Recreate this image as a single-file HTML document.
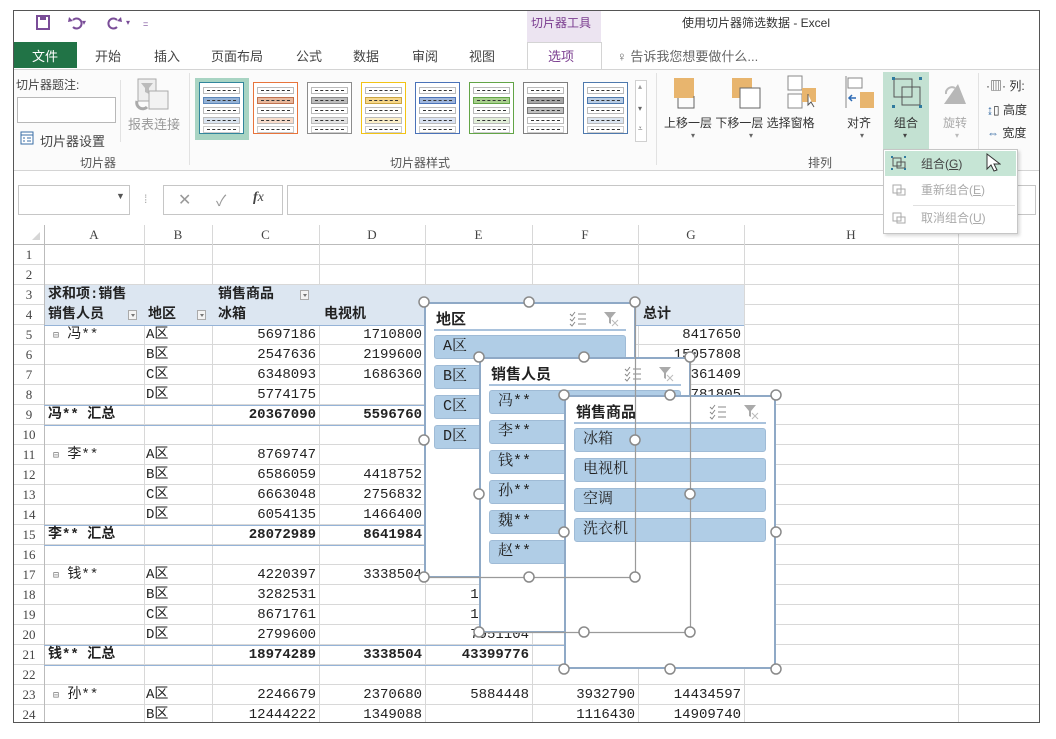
<!DOCTYPE html>
<html><head><meta charset="utf-8"><style>
*{margin:0;padding:0;box-sizing:border-box}
body{width:1056px;height:739px;background:#fff;position:relative;overflow:hidden;font-family:"Liberation Sans","Noto Sans CJK SC",sans-serif;font-size:12px;color:#444}
.a{position:absolute}
.frame{position:absolute;left:13px;top:10px;width:1027px;height:713px;border:1.5px solid #555}
.ui{position:absolute;font-family:"Liberation Sans","Noto Sans CJK SC",sans-serif;font-size:12px;color:#444;white-space:nowrap}
.tile{position:absolute;top:82px;width:45px;height:52px;border:1px solid;background:#fff}
.tile i{position:absolute;left:3px;width:37px;height:7px;border:1px solid;background:#fff}
.tile i:after{content:"";position:absolute;left:3px;right:3px;top:2px;border-top:1.5px dashed #333}
.c{position:absolute;height:20px;line-height:20px;font-family:"Liberation Mono","Noto Sans CJK SC",monospace;font-size:14px;color:#222;white-space:nowrap}
.r{text-align:right}
.b{font-weight:bold}
.hl{position:absolute;left:44px;width:700px;border-top:1px solid #95b3d7}
.vl{position:absolute;top:225px;height:497px;border-left:1px solid #d8d8d8}
.ch{position:absolute;top:225px;height:20px;line-height:20px;text-align:center;font-family:"Liberation Serif",serif;font-size:13px;color:#444}
.rh{position:absolute;left:14px;width:30px;height:20px;line-height:20px;text-align:center;font-family:"Liberation Serif",serif;font-size:13px;color:#444}
.sl{position:absolute;background:#fff;border:2px solid #8fa9c6}
.st{position:absolute;left:10px;top:4px;font-family:"Liberation Sans","Noto Sans CJK SC",sans-serif;font-weight:bold;font-size:15px;color:#222}
.sln{position:absolute;left:8px;right:8px;top:25px;border-top:2px solid #a9c2dc}
.it{position:absolute;left:8px;right:8px;height:24px;background:#b0cde6;border:1px solid #9fbbd6;border-radius:3px;line-height:22px;padding-left:8px;font-family:"Liberation Mono","Noto Serif CJK SC",serif;font-size:15px;color:#222}
.dd{position:absolute;width:9px;height:10px;border:1px solid #aaa;background:#f4f4f4}
.dd:after{content:"";position:absolute;left:2px;top:3px;border:2.5px solid transparent;border-top:3px solid #777}
</style></head><body>
<div class="frame"></div>

<!-- title bar -->
<svg class="a" style="left:35px;top:15px" width="120" height="16">
<rect x="2" y="1" width="12" height="13" fill="none" stroke="#7a4d98" stroke-width="2"/><rect x="5" y="1" width="6" height="4" fill="#7a4d98"/>
<path d="M38 5 a5 5 0 1 1 0 7" fill="none" stroke="#7a4d98" stroke-width="2"/><path d="M34 2 l4 4 -5 1z" fill="#7a4d98"/>
<text x="47" y="10" font-size="8" fill="#7a4d98">▾</text>
<path d="M82 5 a5 5 0 1 0 0 7" fill="none" stroke="#7a4d98" stroke-width="2"/><path d="M86 2 l-4 4 5 1z" fill="#7a4d98"/>
<text x="91" y="10" font-size="8" fill="#7a4d98">▾</text>
<text x="108" y="12" font-size="9" fill="#7a4d98">=</text>
</svg>
<div class="a" style="left:527px;top:11px;width:74px;height:31px;background:#ece4f1"></div>
<div class="ui" style="left:531px;top:14px;color:#7a3c8f">切片器工具</div>
<div class="ui" style="left:682px;top:14px;color:#333">使用切片器筛选数据 - Excel</div>

<!-- tabs -->
<div class="a" style="left:14px;top:42px;width:63px;height:26px;background:#217346"></div>
<div class="ui" style="left:32px;top:46px;color:#fff;font-size:13px">文件</div>
<div class="ui" style="left:95px;top:46px;font-size:13px">开始</div>
<div class="ui" style="left:154px;top:46px;font-size:13px">插入</div>
<div class="ui" style="left:211px;top:46px;font-size:13px">页面布局</div>
<div class="ui" style="left:296px;top:46px;font-size:13px">公式</div>
<div class="ui" style="left:353px;top:46px;font-size:13px">数据</div>
<div class="ui" style="left:412px;top:46px;font-size:13px">审阅</div>
<div class="ui" style="left:469px;top:46px;font-size:13px">视图</div>
<div class="a" style="left:527px;top:42px;width:75px;height:28px;background:#fff;border:1px solid #d4d4d4;border-bottom:none"></div>
<div class="ui" style="left:548px;top:46px;font-size:13px;color:#7a3c8f">选项</div>
<div class="ui" style="left:617px;top:46px;font-size:13px;color:#666">♀ 告诉我您想要做什么...</div>

<!-- ribbon -->
<div class="a" style="left:14px;top:69px;width:1025px;height:102px;background:#fbfbfb;border-top:1px solid #d4d4d4;border-bottom:1px solid #d4d4d4"></div>
<div class="ui" style="left:16px;top:76px">切片器题注:</div>
<div class="a" style="left:17px;top:97px;width:99px;height:26px;border:1px solid #b8b8b8;background:#fff"></div>
<svg class="a" style="left:20px;top:131px" width="14" height="14"><rect x="1" y="1" width="12" height="12" fill="#fff" stroke="#3a6ea5"/><path d="M1 4h12M3 7h2M3 10h2M7 7h4M7 10h4" stroke="#3a6ea5"/></svg>
<div class="ui" style="left:40px;top:131px;font-size:13px">切片器设置</div>
<svg class="a" style="left:135px;top:77px" width="36" height="36"><rect x="3" y="2" width="18" height="22" fill="#eee" stroke="#aaa"/><path d="M6 6h12l-4 5v6l-4-2v-4z" fill="#bbb"/><rect x="14" y="14" width="19" height="18" fill="#f2f2f2" stroke="#aaa"/><path d="M2 24 a6 6 0 0 0 10 6" fill="none" stroke="#aaa" stroke-width="3"/></svg>
<div class="ui" style="left:128px;top:114px;color:#999;font-size:13px">报表连接</div>
<div class="a" style="left:120px;top:80px;height:62px;border-left:1px solid #e2e2e2"></div>
<div class="ui" style="left:80px;top:154px;color:#555">切片器</div>
<div class="a" style="left:189px;top:73px;height:92px;border-left:1px solid #e2e2e2"></div>

<div class="a" style="left:195px;top:78px;width:54px;height:62px;background:#a8d4c3"></div>
<div class="tile" style="left:199px;border-color:#31859c"><i style="top:4px;border-color:#bbb"></i><i style="top:14px;border-color:#5b86b8;background:#95b3d7"></i><i style="top:24px;border-color:#bbb"></i><i style="top:34px;border-color:#bbb;background:#dbe5f1"></i><i style="top:43px;border-color:#ccc"></i></div>
<div class="tile" style="left:253px;border-color:#e8743b"><i style="top:4px;border-color:#bbb"></i><i style="top:14px;border-color:#c0724f;background:#e8b89c"></i><i style="top:24px;border-color:#bbb"></i><i style="top:34px;border-color:#bbb;background:#f8dccb"></i><i style="top:43px;border-color:#ccc"></i></div>
<div class="tile" style="left:307px;border-color:#8c8c8c"><i style="top:4px;border-color:#bbb"></i><i style="top:14px;border-color:#888;background:#bdbdbd"></i><i style="top:24px;border-color:#bbb"></i><i style="top:34px;border-color:#bbb;background:#e4e4e4"></i><i style="top:43px;border-color:#ccc"></i></div>
<div class="tile" style="left:361px;border-color:#f2c314"><i style="top:4px;border-color:#bbb"></i><i style="top:14px;border-color:#c9a440;background:#f7d78a"></i><i style="top:24px;border-color:#bbb"></i><i style="top:34px;border-color:#bbb;background:#fcefc8"></i><i style="top:43px;border-color:#ccc"></i></div>
<div class="tile" style="left:415px;border-color:#4a72b8"><i style="top:4px;border-color:#bbb"></i><i style="top:14px;border-color:#4a72b8;background:#9fb6dc"></i><i style="top:24px;border-color:#bbb"></i><i style="top:34px;border-color:#bbb;background:#d9e2f2"></i><i style="top:43px;border-color:#ccc"></i></div>
<div class="tile" style="left:469px;border-color:#62a446"><i style="top:4px;border-color:#bbb"></i><i style="top:14px;border-color:#62a446;background:#a9d08e"></i><i style="top:24px;border-color:#bbb"></i><i style="top:34px;border-color:#bbb;background:#e2efd9"></i><i style="top:43px;border-color:#ccc"></i></div>
<div class="tile" style="left:523px;border-color:#7f7f7f"><i style="top:4px;border-color:#bbb"></i><i style="top:14px;border-color:#777;background:#a6a6a6"></i><i style="top:24px;border-color:#777;background:#bfbfbf"></i><i style="top:34px;border-color:#bbb"></i><i style="top:43px;border-color:#ccc"></i></div>
<div class="tile" style="left:583px;border-color:#4e79ad"><i style="top:4px;border-color:#bbb"></i><i style="top:14px;border-color:#4e79ad;background:#b8cce4"></i><i style="top:24px;border-color:#bbb"></i><i style="top:34px;border-color:#bbb;background:#dbe5f1"></i><i style="top:43px;border-color:#ccc"></i></div>
<div class="a" style="left:635px;top:80px;width:12px;height:62px;border:1px solid #d0d0d0;background:#fff"></div>
<div class="ui" style="left:638px;top:82px;font-size:8px;color:#999">▴</div>
<div class="ui" style="left:638px;top:104px;font-size:8px;color:#666">▾</div>
<div class="ui" style="left:638px;top:124px;font-size:8px;color:#666">⩡</div>
<div class="ui" style="left:390px;top:154px;color:#555">切片器样式</div>
<div class="a" style="left:656px;top:73px;height:92px;border-left:1px solid #e2e2e2"></div>

<svg class="a" style="left:664px;top:74px" width="320" height="42">
<rect x="10" y="4" width="20" height="20" fill="#e8b56e"/><path d="M30 22v12h-16v-10" fill="none" stroke="#666"/>
<rect x="68" y="4" width="20" height="20" fill="#e8b56e"/><rect x="76" y="14" width="20" height="20" fill="#fff" stroke="#666"/>
<rect x="124" y="2" width="14" height="14" fill="#fff" stroke="#888"/><rect x="124" y="20" width="14" height="14" fill="#fff" stroke="#888"/><rect x="138" y="14" width="14" height="14" fill="#e8b56e"/><path d="M144 20v11l3-3 3 5" fill="#fff" stroke="#555"/>
<path d="M182 2v32" stroke="#888"/><rect x="184" y="4" width="14" height="10" fill="#fff" stroke="#888"/><rect x="196" y="18" width="14" height="16" fill="#e8b56e"/><path d="M192 24h-7m3-3l-3 3 3 3" stroke="#2d6bb5" fill="none" stroke-width="1.5"/>
</svg>
<div class="ui" style="left:664px;top:114px;font-size:12px;color:#333">上移一层 下移一层 选择窗格</div>
<div class="ui" style="left:847px;top:114px;font-size:12px;color:#333">对齐</div>
<div class="ui" style="left:691px;top:131px;font-size:8px;color:#666">▾</div>
<div class="ui" style="left:749px;top:131px;font-size:8px;color:#666">▾</div>
<div class="ui" style="left:860px;top:131px;font-size:8px;color:#666">▾</div>
<div class="a" style="left:883px;top:72px;width:46px;height:78px;background:#c3e1d2"></div>
<svg class="a" style="left:890px;top:76px" width="34" height="34"><rect x="4" y="3" width="18" height="18" fill="none" stroke="#555"/><rect x="12" y="11" width="18" height="18" fill="none" stroke="#555"/><g fill="#2f7a9e"><rect x="2" y="1" width="3" height="3"/><rect x="29" y="1" width="3" height="3"/><rect x="2" y="29" width="3" height="3"/><rect x="29" y="29" width="3" height="3"/></g></svg>
<div class="ui" style="left:894px;top:114px;color:#333">组合</div>
<div class="ui" style="left:903px;top:131px;font-size:8px;color:#444">▾</div>
<svg class="a" style="left:940px;top:80px" width="30" height="26"><path d="M4 24h22l-8-20z" fill="#b7b7b7"/><path d="M6 14a6 6 0 0 1 9-6" fill="none" stroke="#bbb" stroke-width="2"/></svg>
<div class="ui" style="left:943px;top:114px;color:#aaa">旋转</div>
<div class="ui" style="left:955px;top:131px;font-size:8px;color:#bbb">▾</div>
<div class="ui" style="left:808px;top:154px;color:#555">排列</div>
<div class="a" style="left:978px;top:73px;height:92px;border-left:1px solid #e2e2e2"></div>
<div class="ui" style="left:986px;top:77px;color:#333">·▥· 列:</div>
<div class="ui" style="left:987px;top:101px;color:#333"><span style="color:#3a6ea5">↨</span>▯ 高度</div>
<div class="ui" style="left:987px;top:124px;color:#333"><span style="color:#3a6ea5">⇔</span> 宽度</div>

<!-- formula bar -->
<div class="a" style="left:14px;top:172px;width:1025px;height:53px;background:#fff"></div>
<div class="a" style="left:18px;top:185px;width:112px;height:30px;border:1px solid #c6c6c6"></div>
<div class="ui" style="left:116px;top:191px;font-size:9px;color:#555">▼</div>
<div class="ui" style="left:144px;top:192px;color:#aaa">⁞</div>
<div class="a" style="left:163px;top:185px;width:120px;height:30px;border:1px solid #c6c6c6"></div>
<div class="ui" style="left:178px;top:190px;font-size:16px;color:#999">✕</div>
<div class="ui" style="left:216px;top:190px;font-size:15px;color:#999">✓</div>
<div class="ui" style="left:253px;top:190px;font-family:'Liberation Serif',serif;font-style:italic;font-size:14px;color:#444"><b>f</b>x</div>
<div class="a" style="left:287px;top:185px;width:749px;height:30px;border:1px solid #c6c6c6"></div>

<!-- grid -->
<div class="a" style="left:14px;top:225px;width:1025px;height:497px;background:repeating-linear-gradient(to bottom,transparent 0,transparent 19px,#d8d8d8 19px,#d8d8d8 20px)"></div>
<div class="a" style="left:14px;top:225px;width:1025px;height:20px;background:#fff;border-bottom:1px solid #bbb"></div>
<svg class="a" style="left:30px;top:230px" width="12" height="12"><path d="M10 2v8h-8z" fill="#d6d6d6"/></svg>
<div class="vl" style="left:44px;border-color:#bbb"></div>
<div class="vl" style="left:144px"></div><div class="vl" style="left:212px"></div><div class="vl" style="left:319px"></div><div class="vl" style="left:425px"></div><div class="vl" style="left:532px"></div><div class="vl" style="left:638px"></div><div class="vl" style="left:744px"></div><div class="vl" style="left:958px"></div>
<div class="ch" style="left:44px;width:100px">A</div><div class="ch" style="left:144px;width:68px">B</div><div class="ch" style="left:212px;width:107px">C</div><div class="ch" style="left:319px;width:106px">D</div><div class="ch" style="left:425px;width:107px">E</div><div class="ch" style="left:532px;width:106px">F</div><div class="ch" style="left:638px;width:106px">G</div><div class="ch" style="left:744px;width:214px">H</div>
<div class="rh" style="top:245px">1</div><div class="rh" style="top:265px">2</div><div class="rh" style="top:285px">3</div><div class="rh" style="top:305px">4</div><div class="rh" style="top:325px">5</div><div class="rh" style="top:345px">6</div><div class="rh" style="top:365px">7</div><div class="rh" style="top:385px">8</div><div class="rh" style="top:405px">9</div><div class="rh" style="top:425px">10</div><div class="rh" style="top:445px">11</div><div class="rh" style="top:465px">12</div><div class="rh" style="top:485px">13</div><div class="rh" style="top:505px">14</div><div class="rh" style="top:525px">15</div><div class="rh" style="top:545px">16</div><div class="rh" style="top:565px">17</div><div class="rh" style="top:585px">18</div><div class="rh" style="top:605px">19</div><div class="rh" style="top:625px">20</div><div class="rh" style="top:645px">21</div><div class="rh" style="top:665px">22</div><div class="rh" style="top:685px">23</div><div class="rh" style="top:705px">24</div>

<!-- pivot -->
<div class="a" style="left:45px;top:285px;width:699px;height:40px;background:#dce6f1"></div>
<div class="hl" style="top:325px"></div>
<div class="hl" style="top:405px"></div><div class="hl" style="top:425px"></div>
<div class="hl" style="top:525px"></div><div class="hl" style="top:545px"></div>
<div class="hl" style="top:645px"></div><div class="hl" style="top:665px"></div>
<div class="c b" style="left:48px;top:285px">求和项:销售</div>
<div class="c b" style="left:218px;top:285px">销售商品</div><div class="dd" style="left:300px;top:290px"></div>
<div class="c b" style="left:48px;top:305px">销售人员</div><div class="dd" style="left:128px;top:310px"></div>
<div class="c b" style="left:148px;top:305px">地区</div><div class="dd" style="left:197px;top:310px"></div>
<div class="c b" style="left:218px;top:305px">冰箱</div>
<div class="c b" style="left:324px;top:305px">电视机</div>
<div class="c b" style="left:643px;top:305px">总计</div>

<div class="c" style="left:53px;top:325px"><span style="font-size:10px;color:#777">⊟</span> 冯**</div>
<div class="c" style="left:53px;top:445px"><span style="font-size:10px;color:#777">⊟</span> 李**</div>
<div class="c" style="left:53px;top:565px"><span style="font-size:10px;color:#777">⊟</span> 钱**</div>
<div class="c" style="left:53px;top:685px"><span style="font-size:10px;color:#777">⊟</span> 孙**</div>
<div class="c b" style="left:48px;top:405px">冯** 汇总</div>
<div class="c b" style="left:48px;top:525px">李** 汇总</div>
<div class="c b" style="left:48px;top:645px">钱** 汇总</div>

<div class="c" style="left:146px;top:325px">A区</div><div class="c" style="left:146px;top:345px">B区</div><div class="c" style="left:146px;top:365px">C区</div><div class="c" style="left:146px;top:385px">D区</div>
<div class="c" style="left:146px;top:445px">A区</div><div class="c" style="left:146px;top:465px">B区</div><div class="c" style="left:146px;top:485px">C区</div><div class="c" style="left:146px;top:505px">D区</div>
<div class="c" style="left:146px;top:565px">A区</div><div class="c" style="left:146px;top:585px">B区</div><div class="c" style="left:146px;top:605px">C区</div><div class="c" style="left:146px;top:625px">D区</div>
<div class="c" style="left:146px;top:685px">A区</div><div class="c" style="left:146px;top:705px">B区</div>

<!-- C col right 316, D right 422, E right 529, F right 635, G right 741 -->
<div class="c r" style="left:212px;width:104px;top:325px">5697186</div>
<div class="c r" style="left:212px;width:104px;top:345px">2547636</div>
<div class="c r" style="left:212px;width:104px;top:365px">6348093</div>
<div class="c r" style="left:212px;width:104px;top:385px">5774175</div>
<div class="c r b" style="left:212px;width:104px;top:405px">20367090</div>
<div class="c r" style="left:212px;width:104px;top:445px">8769747</div>
<div class="c r" style="left:212px;width:104px;top:465px">6586059</div>
<div class="c r" style="left:212px;width:104px;top:485px">6663048</div>
<div class="c r" style="left:212px;width:104px;top:505px">6054135</div>
<div class="c r b" style="left:212px;width:104px;top:525px">28072989</div>
<div class="c r" style="left:212px;width:104px;top:565px">4220397</div>
<div class="c r" style="left:212px;width:104px;top:585px">3282531</div>
<div class="c r" style="left:212px;width:104px;top:605px">8671761</div>
<div class="c r" style="left:212px;width:104px;top:625px">2799600</div>
<div class="c r b" style="left:212px;width:104px;top:645px">18974289</div>
<div class="c r" style="left:212px;width:104px;top:685px">2246679</div>
<div class="c r" style="left:212px;width:104px;top:705px">12444222</div>

<div class="c r" style="left:319px;width:103px;top:325px">1710800</div>
<div class="c r" style="left:319px;width:103px;top:345px">2199600</div>
<div class="c r" style="left:319px;width:103px;top:365px">1686360</div>
<div class="c r b" style="left:319px;width:103px;top:405px">5596760</div>
<div class="c r" style="left:319px;width:103px;top:465px">4418752</div>
<div class="c r" style="left:319px;width:103px;top:485px">2756832</div>
<div class="c r" style="left:319px;width:103px;top:505px">1466400</div>
<div class="c r b" style="left:319px;width:103px;top:525px">8641984</div>
<div class="c r" style="left:319px;width:103px;top:565px">3338504</div>
<div class="c r b" style="left:319px;width:103px;top:645px">3338504</div>
<div class="c r" style="left:319px;width:103px;top:685px">2370680</div>
<div class="c r" style="left:319px;width:103px;top:705px">1349088</div>

<div class="c r" style="left:425px;width:104px;top:585px">1644016</div>
<div class="c r" style="left:425px;width:104px;top:605px">1200400</div>
<div class="c r" style="left:425px;width:104px;top:625px">7951104</div>
<div class="c r b" style="left:425px;width:104px;top:645px">43399776</div>
<div class="c r" style="left:425px;width:104px;top:685px">5884448</div>
<div class="c r b" style="left:532px;width:103px;top:645px">13220560</div>
<div class="c r" style="left:532px;width:103px;top:685px">3932790</div>
<div class="c r" style="left:532px;width:103px;top:705px">1116430</div>

<div class="c r" style="left:638px;width:103px;top:325px">8417650</div>
<div class="c r" style="left:638px;width:103px;top:345px">15057808</div>
<div class="c r" style="left:638px;width:103px;top:365px">10361409</div>
<div class="c r" style="left:638px;width:103px;top:385px">7781805</div>
<div class="c r" style="left:638px;width:103px;top:685px">14434597</div>
<div class="c r" style="left:638px;width:103px;top:705px">14909740</div>

<!-- slicers -->
<div class="sl" style="left:424px;top:302px;width:212px;height:276px">
 <div class="st">地区</div><div class="sln"></div>
 <svg class="a" style="left:142px;top:6px" width="60" height="18"><path d="M2 4l2 2 3-4M2 9l2 2 3-4M2 14l2 2 3-4M10 4h8M10 9h8M10 14h8" stroke="#888" fill="none"/><path d="M36 2h12l-5 6v6l-2-1v-5z" fill="#aaa"/><path d="M44 10l6 6M50 10l-6 6" stroke="#bbb"/></svg>
 <div class="it" style="top:31px">A区</div><div class="it" style="top:61px">B区</div><div class="it" style="top:91px">C区</div><div class="it" style="top:121px">D区</div>
</div>
<div class="sl" style="left:479px;top:357px;width:212px;height:276px">
 <div class="st">销售人员</div><div class="sln"></div>
 <svg class="a" style="left:142px;top:6px" width="60" height="18"><path d="M2 4l2 2 3-4M2 9l2 2 3-4M2 14l2 2 3-4M10 4h8M10 9h8M10 14h8" stroke="#888" fill="none"/><path d="M36 2h12l-5 6v6l-2-1v-5z" fill="#aaa"/><path d="M44 10l6 6M50 10l-6 6" stroke="#bbb"/></svg>
 <div class="it" style="top:31px">冯**</div><div class="it" style="top:61px">李**</div><div class="it" style="top:91px">钱**</div><div class="it" style="top:121px">孙**</div><div class="it" style="top:151px">魏**</div><div class="it" style="top:181px">赵**</div>
</div>
<div class="sl" style="left:564px;top:395px;width:212px;height:274px">
 <div class="st">销售商品</div><div class="sln"></div>
 <svg class="a" style="left:142px;top:6px" width="60" height="18"><path d="M2 4l2 2 3-4M2 9l2 2 3-4M2 14l2 2 3-4M10 4h8M10 9h8M10 14h8" stroke="#888" fill="none"/><path d="M36 2h12l-5 6v6l-2-1v-5z" fill="#aaa"/><path d="M44 10l6 6M50 10l-6 6" stroke="#bbb"/></svg>
 <div class="it" style="top:31px">冰箱</div><div class="it" style="top:61px">电视机</div><div class="it" style="top:91px">空调</div><div class="it" style="top:121px">洗衣机</div>
</div>
<svg class="a" style="left:0;top:0" width="1056" height="739">
<g fill="none" stroke="#9a9a9a" stroke-width="1.2">
<path d="M635.5 302v275.5H424"/><path d="M690.5 357v275.5H479"/>
</g>
<g fill="#fff" stroke="#8a8a8a" stroke-width="1.5">
<circle cx="424" cy="302" r="5"/><circle cx="529" cy="302" r="5"/><circle cx="635" cy="302" r="5"/><circle cx="424" cy="440" r="5"/><circle cx="635" cy="440" r="5"/><circle cx="424" cy="577" r="5"/><circle cx="529" cy="577" r="5"/><circle cx="635" cy="577" r="5"/>
<circle cx="479" cy="357" r="5"/><circle cx="584" cy="357" r="5"/><circle cx="690" cy="357" r="5"/><circle cx="479" cy="494" r="5"/><circle cx="690" cy="494" r="5"/><circle cx="479" cy="632" r="5"/><circle cx="584" cy="632" r="5"/><circle cx="690" cy="632" r="5"/>
<circle cx="564" cy="395" r="5"/><circle cx="670" cy="395" r="5"/><circle cx="776" cy="395" r="5"/><circle cx="564" cy="532" r="5"/><circle cx="776" cy="532" r="5"/><circle cx="564" cy="669" r="5"/><circle cx="670" cy="669" r="5"/><circle cx="776" cy="669" r="5"/>
</g>
</svg>

<!-- dropdown menu -->
<div class="a" style="left:883px;top:149px;width:135px;height:85px;background:#fff;border:1px solid #c6c6c6;box-shadow:2px 2px 3px rgba(0,0,0,.15)"></div>
<div class="a" style="left:885px;top:151px;width:131px;height:25px;background:#c6e5d5"></div>
<div class="a" style="left:913px;top:205px;width:102px;border-top:1px solid #e0e0e0"></div>
<svg class="a" style="left:891px;top:155px" width="16" height="72"><g fill="none" stroke="#555"><rect x="2" y="3" width="8" height="8"/><rect x="6" y="7" width="8" height="6"/></g><g fill="#2f7a9e"><rect x="0" y="1" width="2" height="2"/><rect x="13" y="1" width="2" height="2"/><rect x="0" y="13" width="2" height="2"/><rect x="13" y="13" width="2" height="2"/></g>
<g fill="none" stroke="#aaa"><rect x="2" y="30" width="8" height="8"/><rect x="6" y="34" width="8" height="6"/><rect x="2" y="58" width="8" height="8"/><rect x="6" y="62" width="8" height="6"/></g></svg>
<div class="ui" style="left:921px;top:155px;color:#444">组合(<u>G</u>)</div>
<svg class="a" style="left:985px;top:152px" width="16" height="22"><path d="M2 2v15l4-4 3 6 3-1-3-6h6z" fill="#fff" stroke="#333"/></svg>
<div class="ui" style="left:921px;top:181px;color:#aaa">重新组合(<u>E</u>)</div>
<div class="ui" style="left:921px;top:209px;color:#aaa">取消组合(<u>U</u>)</div>
</body></html>
